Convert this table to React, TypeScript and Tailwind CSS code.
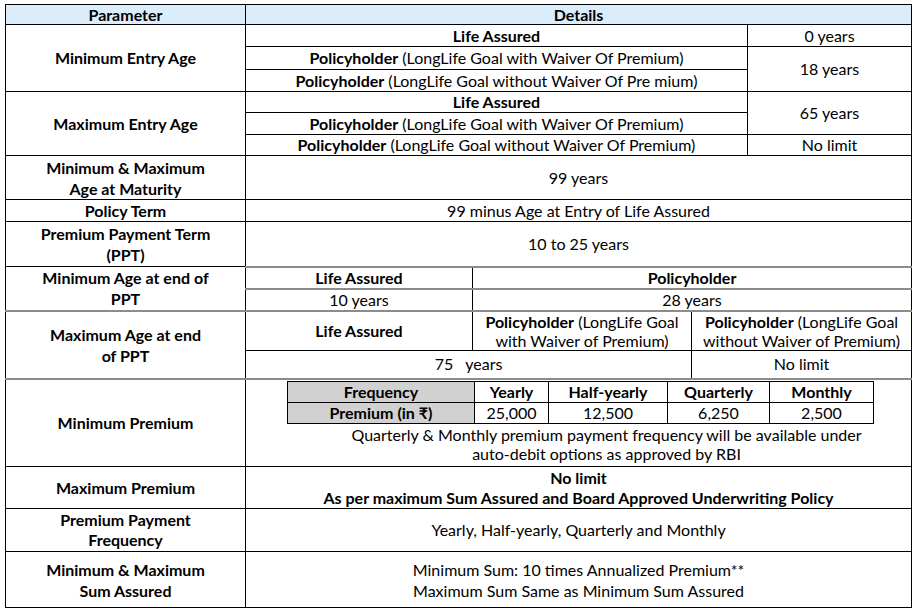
import React from "react";

const td = "border border-black p-0 text-center align-middle";
const gT = "border-t-2 border-t-[#8c8c8c]";
const gB = "border-b-2 border-b-[#8c8c8c]";

function PH({ rest }: { rest: string }) {
  return (
    <>
      <b>Policyholder</b> {rest}
    </>
  );
}

export default function App() {
  return (
    <div className="w-[914px] h-[611px] bg-white pt-[4px] pl-[5px] text-black" style={{ fontFamily: 'Lato, "Liberation Sans", sans-serif' }}>
      <table className="table-fixed border-collapse w-[906px] text-[16px] leading-[18px]">
        <colgroup>
          <col className="w-[240px]" />
          <col className="w-[227px]" />
          <col className="w-[219px]" />
          <col className="w-[56px]" />
          <col className="w-[164px]" />
        </colgroup>
        <tbody>
          <tr className="h-[20px] bg-[#dbedfb] font-bold">
            <td className={td}>Parameter</td>
            <td className={td} colSpan={4}>Details</td>
          </tr>

          <tr className="h-[22px]">
            <td className={`${td} font-bold`} rowSpan={3}>Minimum Entry Age</td>
            <td className={`${td} font-bold`} colSpan={3}>Life Assured</td>
            <td className={td}>0 years</td>
          </tr>
          <tr className="h-[23px]">
            <td className={td} colSpan={3}><PH rest="(LongLife Goal with Waiver Of Premium)" /></td>
            <td className={td} rowSpan={2}>18 years</td>
          </tr>
          <tr className="h-[22px]">
            <td className={td} colSpan={3}><PH rest="(LongLife Goal without Waiver Of Pre mium)" /></td>
          </tr>

          <tr className="h-[21px]">
            <td className={`${td} font-bold`} rowSpan={3}>Maximum Entry Age</td>
            <td className={`${td} font-bold`} colSpan={3}>Life Assured</td>
            <td className={td} rowSpan={2}>65 years</td>
          </tr>
          <tr className="h-[22px]">
            <td className={td} colSpan={3}><PH rest="(LongLife Goal with Waiver Of Premium)" /></td>
          </tr>
          <tr className="h-[21px]">
            <td className={td} colSpan={3}><PH rest="(LongLife Goal without Waiver Of Premium)" /></td>
            <td className={td}>No limit</td>
          </tr>

          <tr className="h-[44px]">
            <td className={`${td} font-bold leading-[21px]`}>Minimum &amp; Maximum<br />Age at Maturity</td>
            <td className={td} colSpan={4}>99 years</td>
          </tr>
          <tr className="h-[22px]">
            <td className={`${td} font-bold`}>Policy Term</td>
            <td className={td} colSpan={4}>99 minus Age at Entry of Life Assured</td>
          </tr>
          <tr className="h-[45px]">
            <td className={`${td} font-bold leading-[21px]`}>Premium Payment Term<br />(PPT)</td>
            <td className={td} colSpan={4}>10 to 25 years</td>
          </tr>

          <tr className="h-[22px]">
            <td className={`${td} ${gB} font-bold leading-[21px]`} rowSpan={2}>Minimum Age at end of<br />PPT</td>
            <td className={`${td} ${gT} border-b-2 border-b-[#8c8c8c] font-bold`}>Life Assured</td>
            <td className={`${td} ${gT} border-b-2 border-b-[#8c8c8c] font-bold`} colSpan={3}>Policyholder</td>
          </tr>
          <tr className="h-[22px]">
            <td className={`${td} ${gB}`}>10 years</td>
            <td className={`${td} ${gB}`} colSpan={3}>28 years</td>
          </tr>

          <tr className="h-[40px]">
            <td className={`${td} ${gB} font-bold leading-[21px]`} rowSpan={2}>Maximum Age at end<br />of PPT</td>
            <td className={`${td} font-bold`}>Life Assured</td>
            <td className={`${td} leading-[19px]`}><b>Policyholder</b> (LongLife Goal<br />with Waiver of Premium)</td>
            <td className={`${td} leading-[19px]`} colSpan={2}><b>Policyholder</b> (LongLife Goal<br />without Waiver of Premium)</td>
          </tr>
          <tr className="h-[28px]">
            <td className={`${td} ${gB}`} colSpan={2}>
              75<span className="ml-[12px]">years</span>
            </td>
            <td className={`${td} ${gB}`} colSpan={2}>No limit</td>
          </tr>

          <tr className="h-[88px]">
            <td className={`${td} font-bold`}>Minimum Premium</td>
            <td className={`${td} align-top`} colSpan={4}>
              <div className="pt-[1px] pl-[41px]">
                <table className="table-fixed border-collapse w-[586px] leading-[18px]">
                  <colgroup>
                    <col className="w-[187px]" />
                    <col className="w-[74px]" />
                    <col className="w-[119px]" />
                    <col className="w-[102px]" />
                    <col className="w-[104px]" />
                  </colgroup>
                  <tbody>
                    <tr className="h-[21px] font-bold">
                      <td className={`${td} bg-[#d1d1d1]`}>Frequency</td>
                      <td className={td}>Yearly</td>
                      <td className={td}>Half-yearly</td>
                      <td className={td}>Quarterly</td>
                      <td className={td}>Monthly</td>
                    </tr>
                    <tr className="h-[21px]">
                      <td className={`${td} bg-[#d1d1d1] font-bold`}>Premium (in ₹)</td>
                      <td className={td}>25,000</td>
                      <td className={td}>12,500</td>
                      <td className={td}>6,250</td>
                      <td className={td}>2,500</td>
                    </tr>
                  </tbody>
                </table>
              </div>
              <div className="pl-[56px] leading-[19px] pt-[1px]">
                Quarterly &amp; Monthly premium payment frequency will be available under
                <br />
                auto-debit options as approved by RBI
              </div>
            </td>
          </tr>

          <tr className="h-[42px]">
            <td className={`${td} font-bold`}>Maximum Premium</td>
            <td className={`${td} font-bold leading-[20px]`} colSpan={4}>
              No limit
              <br />
              As per maximum Sum Assured and Board Approved Underwriting Policy
            </td>
          </tr>
          <tr className="h-[43px]">
            <td className={`${td} font-bold leading-[20px]`}>Premium Payment<br />Frequency</td>
            <td className={td} colSpan={4}>Yearly, Half-yearly, Quarterly and Monthly</td>
          </tr>
          <tr className="h-[56px]">
            <td className={`${td} font-bold leading-[21px]`}>Minimum &amp; Maximum<br />Sum Assured</td>
            <td className={`${td} leading-[21px]`} colSpan={4}>
              Minimum Sum: 10 times Annualized Premium**
              <br />
              Maximum Sum Same as Minimum Sum Assured
            </td>
          </tr>
        </tbody>
      </table>
    </div>
  );
}
